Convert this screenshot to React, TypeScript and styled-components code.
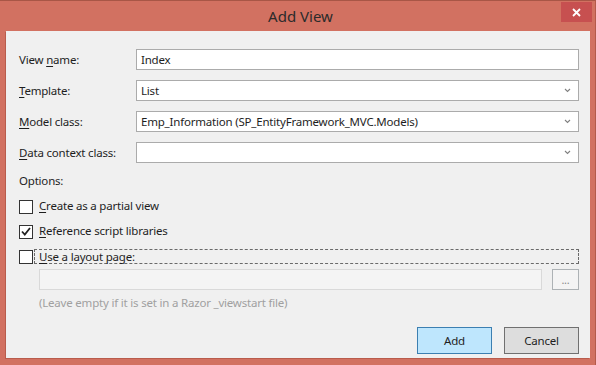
import { Fragment } from 'react'
import styled, { createGlobalStyle } from 'styled-components'

const GlobalStyle = createGlobalStyle`
  html, body {
    margin: 0;
    padding: 0;
    background: #d27161;
  }
  body {
    font-family: "Noto Sans", "Open Sans", "DejaVu Sans", sans-serif;
    font-size: 11.5px;
    letter-spacing: -0.2px;
    color: #1e1e1e;
  }
`

const Window = styled.div`
  box-sizing: border-box;
  width: 596px;
  height: 365px;
  background: #d27161;
  border-top: 1px solid #a85646;
  border-right: 1px solid #b45a4a;
  display: flex;
  flex-direction: column;
`

const TitleBar = styled.div`
  position: relative;
  height: 30px;
  display: flex;
  align-items: center;
  justify-content: center;
`

const Title = styled.div`
  font-size: 15px;
  letter-spacing: 0;
  color: #2b2b2b;
  margin-left: 6px;
`

const CloseButton = styled.div`
  position: absolute;
  top: 1px;
  right: 3px;
  width: 31px;
  height: 20px;
  background: #c75050;
  display: flex;
  align-items: center;
  justify-content: center;
`

const Client = styled.div`
  box-sizing: border-box;
  margin: 0 5px 0 6px;
  height: 327px;
  background: #f0f0f0;
  box-shadow: -1px 1px 0 #b95c4c;
  padding: 18px 11px 0 13px;
  display: flex;
  flex-direction: column;
`

const FieldGrid = styled.div`
  display: grid;
  grid-template-columns: 117px 1fr;
  grid-auto-rows: 21px;
  row-gap: 10px;
  align-items: center;
`

const Label = styled.label`
  line-height: 16px;
`

const Key = styled.span`
  text-decoration: underline;
  text-underline-offset: 2px;
`

const Box = styled.div<{ $disabled?: boolean }>`
  box-sizing: border-box;
  height: 21px;
  border: 1px solid ${({ $disabled }) => ($disabled ? '#d9d9d9' : '#ababab')};
  background: ${({ $disabled }) => ($disabled ? '#f4f4f4' : '#ffffff')};
  display: flex;
  align-items: center;
  padding: 0 7px 0 4px;
  color: #1e1e1e;
`

const BoxText = styled.span`
  flex: 1;
  white-space: nowrap;
`

const Chevron = () => (
  <svg width="7" height="5" viewBox="0 0 7 5">
    <path d="M1 1 L3.5 3.5 L6 1" fill="none" stroke="#808080" strokeWidth="1.1" />
  </svg>
)

const SectionLabel = styled.div`
  margin-top: 10px;
  line-height: 16px;
`

const CheckList = styled.div`
  margin-top: 10px;
  display: flex;
  flex-direction: column;
  gap: 10px;
`

const CheckRow = styled.div`
  display: flex;
  align-items: center;
  height: 15px;
`

const CheckBox = styled.span`
  box-sizing: border-box;
  width: 14px;
  height: 14px;
  border: 1px solid #333333;
  background: #ffffff;
  display: flex;
  align-items: center;
  justify-content: center;
  flex-shrink: 0;
`

const CheckText = styled.span<{ $focused?: boolean }>`
  box-sizing: border-box;
  margin-left: ${({ $focused }) => ($focused ? '1px' : '6px')};
  padding-left: ${({ $focused }) => ($focused ? '4px' : '0')};
  height: 15px;
  line-height: 14px;
  flex: ${({ $focused }) => ($focused ? 1 : 'none')};
  border: ${({ $focused }) => ($focused ? '1px dashed #6a6a6a' : 'none')};
`

const LayoutRow = styled.div`
  margin: 5px 0 0 20px;
  display: flex;
  gap: 10px;
`

const Browse = styled.div`
  box-sizing: border-box;
  width: 27px;
  height: 21px;
  border: 1px solid #adb2b5;
  background: #f4f4f4;
  color: #8a8a8a;
  font-size: 11px;
  display: flex;
  align-items: center;
  justify-content: center;
  line-height: 8px;
`

const Hint = styled.div`
  margin: 5px 0 0 20px;
  line-height: 16px;
  color: #a0a0a0;
`

const ButtonRow = styled.div`
  margin-top: 16px;
  display: flex;
  justify-content: flex-end;
  gap: 12px;
`

const Button = styled.button<{ $primary?: boolean }>`
  box-sizing: border-box;
  width: 75px;
  height: 27px;
  font: inherit;
  letter-spacing: inherit;
  color: #1e1e1e;
  background: ${({ $primary }) => ($primary ? '#bee6fd' : '#dddddd')};
  border: 1px solid ${({ $primary }) => ($primary ? '#3c7fb1' : '#707070')};
  padding: 0;
`

const fields = [
  { label: ['View ', 'n', 'ame:'], value: 'Index', select: false },
  { label: ['', 'T', 'emplate:'], value: 'List', select: true },
  { label: ['', 'M', 'odel class:'], value: 'Emp_Information (SP_EntityFramework_MVC.Models)', select: true },
  { label: ['', 'D', 'ata context class:'], value: '', select: true },
]

export default function App() {
  return (
    <>
      <GlobalStyle />
      <Window>
        <TitleBar>
          <Title>Add View</Title>
          <CloseButton>
            <svg width="9" height="9" viewBox="0 0 9 9">
              <path d="M1 1 L8 8 M8 1 L1 8" stroke="#ffffff" strokeWidth="1.8" />
            </svg>
          </CloseButton>
        </TitleBar>
        <Client>
          <FieldGrid>
            {fields.map(f => (
              <Fragment key={f.label.join('')}>
                <Label>
                  {f.label[0]}
                  <Key>{f.label[1]}</Key>
                  {f.label[2]}
                </Label>
                <Box>
                  <BoxText>{f.value}</BoxText>
                  {f.select && <Chevron />}
                </Box>
              </Fragment>
            ))}
          </FieldGrid>
          <SectionLabel>Options:</SectionLabel>
          <CheckList>
            <CheckRow>
              <CheckBox />
              <CheckText>
                <Key>C</Key>reate as a partial view
              </CheckText>
            </CheckRow>
            <CheckRow>
              <CheckBox>
                <svg width="10" height="9" viewBox="0 0 10 9">
                  <path d="M1 4.5 L3.8 7.5 L9 1" fill="none" stroke="#222222" strokeWidth="1.8" />
                </svg>
              </CheckBox>
              <CheckText>
                <Key>R</Key>eference script libraries
              </CheckText>
            </CheckRow>
            <CheckRow>
              <CheckBox />
              <CheckText $focused>
                <Key>U</Key>se a layout page:
              </CheckText>
            </CheckRow>
          </CheckList>
          <LayoutRow>
            <Box $disabled style={{ flex: 1 }} />
            <Browse>...</Browse>
          </LayoutRow>
          <Hint>(Leave empty if it is set in a Razor _viewstart file)</Hint>
          <ButtonRow>
            <Button $primary>Add</Button>
            <Button>Cancel</Button>
          </ButtonRow>
        </Client>
      </Window>
    </>
  )
}
